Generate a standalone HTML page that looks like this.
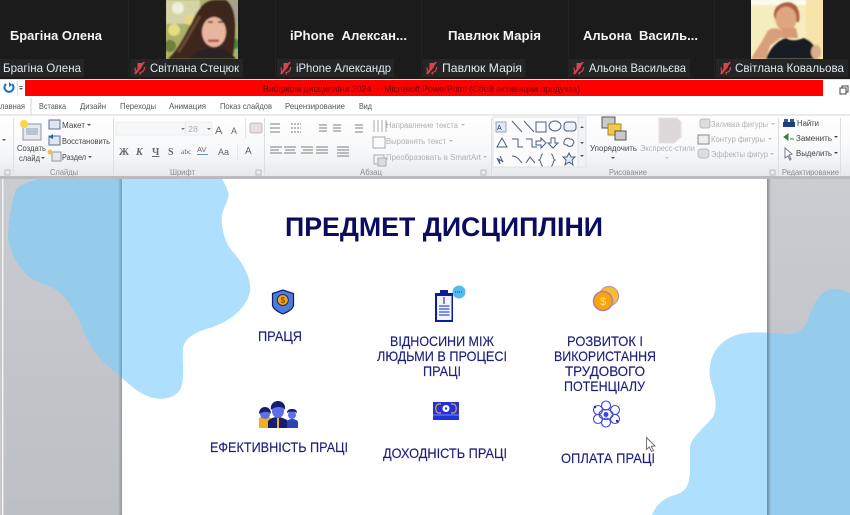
<!DOCTYPE html>
<html><head><meta charset="utf-8">
<style>
html,body{margin:0;padding:0;background:#1a1a1a;width:850px;height:515px;overflow:hidden}
svg{display:block}
text{font-family:"Liberation Sans",sans-serif}
.n{font-weight:bold;font-size:13px;fill:#f4f4f4}
.l{font-size:12px;fill:#dcecf8}
.t{font-size:8.3px;fill:#555}
.r{font-size:8.6px;fill:#444}
.d{font-size:8.6px;fill:#b0b0b0}
.g{font-size:8.6px;fill:#8a8a8a}
.s{font-size:14px;fill:#1f1f7c;stroke:#1f1f7c;stroke-width:.15px}
</style></head><body>
<svg width="850" height="515" viewBox="0 0 850 515" xmlns="http://www.w3.org/2000/svg">
<defs>
<linearGradient id="rib" x1="0" y1="0" x2="0" y2="1"><stop offset="0" stop-color="#ffffff"/><stop offset=".6" stop-color="#f7f8f9"/><stop offset="1" stop-color="#e6e8eb"/></linearGradient>
<linearGradient id="bg" x1="0" y1="0" x2="0" y2="1"><stop offset="0" stop-color="#cbccd2"/><stop offset="1" stop-color="#bcbfc4"/></linearGradient>
<linearGradient id="sL" x1="0" y1="0" x2="1" y2="0"><stop offset="0" stop-color="#000" stop-opacity="0"/><stop offset="1" stop-color="#000" stop-opacity=".22"/></linearGradient>
<linearGradient id="sR" x1="0" y1="0" x2="1" y2="0"><stop offset="0" stop-color="#000" stop-opacity=".32"/><stop offset="1" stop-color="#000" stop-opacity="0"/></linearGradient>
<filter id="b1" x="-10%" y="-10%" width="120%" height="120%"><feGaussianBlur stdDeviation="0.9"/></filter>
<filter id="b0" x="-5%" y="-5%" width="110%" height="110%"><feGaussianBlur stdDeviation="0.3"/></filter>
<clipPath id="slide"><rect x="122" y="179" width="645" height="336"/></clipPath>
<clipPath id="p1"><rect x="166" y="0" width="72" height="59"/></clipPath>
<clipPath id="p2"><rect x="751" y="0" width="72" height="59"/></clipPath>
<path id="blobL" d="M37 179C28 183 18 184 15 192C11 205 9 220 8 235C9 250 16 264 27 275C36 283 46 284 55 289C66 296 74 309 81 325C88 343 98 360 113 370C125 380 135 392 150 397C163 401 176 398 181 388C185 376 182 360 183 348C185 338 195 332 210 328C225 323 245 312 250 292C252 278 242 262 233 252C224 242 221 226 222 215C224 205 231 197 228 192C226 186 224 182 222 179Z"/>
<path id="blobR" d="M652 515C656 505 663 498 675 495C686 492 689 485 690 473L690 447C691 438 702 430 713 417C716 410 716 404 715 397C713 385 708 378 710 367C711 352 722 338 740 334C755 331 770 333 787 334C798 334 804 330 808 320C813 305 820 290 833 289C840 289 846 291 850 293L850 515Z"/>
<path id="mic" d="M0 11.500L9 0L11 0L2 12.500ZM3.500 1h4.500v4l-4.500 5.500zM.5 5.500h1.200c0 1.500 0 2.500 .5 3.500l-.8 1c-.8-1-.9-3-.9-4.500zM10 5h1.200c0 3-1.500 5.500-4.200 5.800v1.700h-1.500v-2.500c2.500 0 4.500-2 4.500-5z"/>
</defs>

<!-- zoom bar -->
<rect width="850" height="79" fill="#1b1b1b"/>
<g fill="#232323"><rect x="128" width="1" height="78"/><rect x="275" width="1" height="78"/><rect x="421" width="1" height="78"/><rect x="568" width="1" height="78"/><rect x="714" width="1" height="78"/></g>

<g clip-path="url(#p1)">
<rect x="166" width="72" height="59" fill="#a9b16a"/>
<g filter="url(#b1)">
<rect x="166" y="0" width="34" height="24" fill="#d6d3a8"/>
<circle cx="178" cy="8" r="6" fill="#eef0d8"/><circle cx="190" cy="20" r="5" fill="#e8d884"/>
<circle cx="174" cy="30" r="6" fill="#e6dc80"/><circle cx="170" cy="46" r="6" fill="#6f7f3a"/>
<rect x="229" y="0" width="9" height="22" fill="#a89f8c"/>
<circle cx="235" cy="44" r="5" fill="#3f8a3c"/><circle cx="232" cy="30" r="3" fill="#7fa050"/>
<path d="M168 59C178 50 186 34 194 18C200 6 206 0 216 0L226 0C232 4 236 14 235 30C235 42 234 52 232 59Z" fill="#3d271c"/>
<path d="M178 52C186 42 192 28 200 16" stroke="#6a4634" stroke-width="3" fill="none"/>
<ellipse cx="214" cy="32" rx="12" ry="15" fill="#e8b69c"/>
<path d="M201 27C206 17 216 13 228 20L228 6L204 8Z" fill="#3d271c"/>
<path d="M208 22h5M218 22h5" stroke="#4a3028" stroke-width="1.500"/>
<path d="M208 39.500h11v2.500h-11z" fill="#b5484c"/>
<path d="M188 59C196 51 206 47 214 49C224 47 230 52 236 59Z" fill="#2a2120"/>
</g></g>

<g clip-path="url(#p2)">
<rect x="751" width="72" height="59" fill="#f6edbf"/>
<g filter="url(#b1)">
<rect x="751" width="72" height="5" fill="#fbfbf3"/>
<rect x="806" y="0" width="17" height="59" fill="#f8e4a8"/>
<path d="M774 16C773 6 782 2 788 2C796 2 801 10 799 22L776 22Z" fill="#b3613f"/>
<ellipse cx="786" cy="19" rx="10.500" ry="12.500" fill="#dda680"/>
<path d="M782 28h14l2 10h-18z" fill="#d69a74"/>
<path d="M751 59C756 50 762 42 767 32C770 27 778 27 783 32L782 37L770 46L766 59Z" fill="#d8a07a"/>
<path d="M766 59C770 48 778 40 786 38C792 42 798 40 804 38C810 40 814 44 816 50L816 59Z" fill="#171a22"/>
<ellipse cx="816" cy="52" rx="5" ry="7" fill="#dcae8c"/>
</g></g>

<g fill="#252525">
<rect x="0" y="59" width="84" height="18"/><rect x="130" y="59" width="113" height="18"/><rect x="277" y="59" width="117" height="18"/><rect x="423" y="59" width="102" height="18"/><rect x="569" y="59" width="121" height="18"/><rect x="716" y="59" width="132" height="18"/>
</g>
<g fill="#d9434c">
<use href="#mic" x="134" y="62"/><use href="#mic" x="280" y="62"/><use href="#mic" x="426" y="62"/><use href="#mic" x="573" y="62"/><use href="#mic" x="720" y="62"/>
</g>
<g filter="url(#b0)">
<text class="n" x="10" y="40" textLength="92" lengthAdjust="spacingAndGlyphs">Брагіна Олена</text>
<text class="n" x="290" y="40" textLength="117" lengthAdjust="spacingAndGlyphs" xml:space="preserve">iPhone  Алексан...</text>
<text class="n" x="448" y="40" textLength="93" lengthAdjust="spacingAndGlyphs">Павлюк Марія</text>
<text class="n" x="583" y="40" textLength="115" lengthAdjust="spacingAndGlyphs" xml:space="preserve">Альона  Василь...</text>
</g>
<g>
<text class="l" x="3" y="72" textLength="78" lengthAdjust="spacingAndGlyphs">Брагіна Олена</text>
<text class="l" x="150" y="72" textLength="89" lengthAdjust="spacingAndGlyphs">Світлана Стецюк</text>
<text class="l" x="296" y="72" textLength="95" lengthAdjust="spacingAndGlyphs">iPhone Александр</text>
<text class="l" x="442" y="72" textLength="80" lengthAdjust="spacingAndGlyphs">Павлюк Марія</text>
<text class="l" x="589" y="72" textLength="97" lengthAdjust="spacingAndGlyphs">Альона Васильєва</text>
<text class="l" x="735" y="72" textLength="109" lengthAdjust="spacingAndGlyphs">Світлана Ковальова</text>
</g>

<!-- title bar -->
<rect x="0" y="79" width="850" height="18" fill="#fff"/>
<rect x="25" y="80" width="798" height="16" fill="#fe0000"/>
<rect x="0" y="79" width="850" height="1" fill="#dfe3e6"/>
<path d="M6 84a4.500 4.500 0 1 0 6 0" fill="none" stroke="#1f6fc4" stroke-width="2"/><path d="M9 82l3 3-3 2z" fill="#1f6fc4"/>
<rect x="17" y="81" width="1" height="15" fill="#ddd"/>
<path d="M19 88h4l-2 2z" fill="#555"/><rect x="19" y="86" width="4" height="1" fill="#777"/>
<text x="263" y="92" font-size="9.500" fill="#5c0606" textLength="317" lengthAdjust="spacingAndGlyphs" xml:space="preserve">Вибіркові дисципліни 2024  -  Microsoft PowerPoint (Сбой активации продукта)</text>
<g fill="none" stroke="#444" stroke-width="1"><rect x="840" y="88" width="6" height="6" fill="#fff"/><path d="M842 88v-2h6v6h-2"/></g>

<!-- tabs -->
<rect x="0" y="97" width="850" height="18" fill="#fff"/>
<g filter="url(#b0)">
<text class="t" x="0" y="109" textLength="25" lengthAdjust="spacingAndGlyphs" fill="#444">лавная</text>
<text class="t" x="39" y="109" textLength="27" lengthAdjust="spacingAndGlyphs">Вставка</text>
<text class="t" x="80" y="109" textLength="26" lengthAdjust="spacingAndGlyphs">Дизайн</text>
<text class="t" x="120" y="109" textLength="36" lengthAdjust="spacingAndGlyphs">Переходы</text>
<text class="t" x="169" y="109" textLength="37" lengthAdjust="spacingAndGlyphs">Анимация</text>
<text class="t" x="220" y="109" textLength="52" lengthAdjust="spacingAndGlyphs">Показ слайдов</text>
<text class="t" x="285" y="109" textLength="60" lengthAdjust="spacingAndGlyphs">Рецензирование</text>
<text class="t" x="359" y="109" textLength="13" lengthAdjust="spacingAndGlyphs">Вид</text>
</g>

<!-- ribbon -->
<rect x="0" y="115" width="850" height="62" fill="url(#rib)"/>
<path d="M0 115H31V98M31 115H850" fill="none" stroke="#d4d6da"/>
<rect x="0" y="176" width="850" height="3" fill="#b9bbbf"/>
<g fill="#dcdee1"><rect x="13" y="118" width="1" height="57"/><rect x="113" y="118" width="1" height="57"/><rect x="264" y="118" width="1" height="57"/><rect x="491" y="118" width="1" height="57"/><rect x="778" y="118" width="1" height="57"/><rect x="840" y="118" width="1" height="57"/></g>

<g filter="url(#b0)">
<!-- slides group -->
<path d="M2 139h4l-2 2z" fill="#555"/>
<rect x="23" y="124" width="18" height="16" fill="#e6e9ef" stroke="#8d97a6"/><rect x="26" y="128" width="12" height="7" fill="#b9c4d6"/>
<circle cx="24" cy="124" r="4" fill="#f8d840"/>
<text class="r" x="17" y="151" textLength="29" lengthAdjust="spacingAndGlyphs">Создать</text>
<text class="r" x="19" y="161" textLength="21" lengthAdjust="spacingAndGlyphs">слайд</text><path d="M41 157h4l-2 2z" fill="#555"/>
<rect x="49" y="120" width="11" height="9" fill="#dfe6f0" stroke="#5a6f94"/>
<text class="r" x="62" y="128" textLength="23" lengthAdjust="spacingAndGlyphs">Макет</text><path d="M87 124h4l-2 2z" fill="#555"/>
<rect x="49" y="136" width="11" height="9" fill="#dfe6f0" stroke="#5a6f94"/><path d="M49 137l4-3v5z" fill="#1e5fb0"/>
<text class="r" x="62" y="144" textLength="48" lengthAdjust="spacingAndGlyphs">Восстановить</text>
<rect x="52" y="152" width="9" height="9" fill="#e8e8ec" stroke="#8d97a6"/><circle cx="50" cy="152" r="2.500" fill="#f2c23c"/>
<text class="r" x="62" y="160" textLength="24" lengthAdjust="spacingAndGlyphs">Раздел</text><path d="M88 156h4l-2 2z" fill="#555"/>
<text class="g" x="50" y="175" textLength="28" lengthAdjust="spacingAndGlyphs">Слайды</text>
<rect x="5" y="170" width="5" height="5" fill="none" stroke="#bbb"/>

<!-- font -->
<rect x="116" y="122" width="69" height="13" fill="#f6f7f8" stroke="#eceef0"/><rect x="186" y="122" width="26" height="13" fill="#f6f7f8" stroke="#eceef0"/>
<path d="M181 128h4l-2 2zM207 128h4l-2 2z" fill="#777"/>
<text class="d" x="188" y="132" textLength="10" lengthAdjust="spacingAndGlyphs">28</text>
<text x="215" y="134" font-size="11" fill="#666">A</text><text x="231" y="134" font-size="9" fill="#666">A</text>
<rect x="245" y="118" width="1" height="20" fill="#e5e5e5"/>
<rect x="250" y="123" width="12" height="10" rx="2" fill="#e9dfe3" stroke="#bbb"/>
<g fill="#666">
<text x="119" y="155" font-size="10" font-weight="bold" style="font-family:'Liberation Serif'">Ж</text>
<text x="136" y="155" font-size="10" font-style="italic" font-weight="bold" style="font-family:'Liberation Serif'">К</text>
<text x="152" y="155" font-size="10" font-weight="bold" text-decoration="underline" style="font-family:'Liberation Serif'">Ч</text>
<text x="168" y="155" font-size="10" font-weight="bold" style="font-family:'Liberation Serif'">S</text>
<text x="181" y="154" font-size="7.500" style="font-family:'Liberation Serif'">abc</text>
<text x="197" y="152" font-size="7.500">AV</text>
<text x="218" y="155" font-size="9">Aa</text>
<text x="245" y="154" font-size="10">A</text>
</g>
<rect x="197" y="154" width="11" height="1" fill="#6e8fb0"/>
<rect x="237" y="144" width="1" height="16" fill="#e5e5e5"/>
<text class="g" x="170" y="175" textLength="25" lengthAdjust="spacingAndGlyphs">Шрифт</text>
<rect x="256" y="170" width="5" height="5" fill="none" stroke="#bbb"/>

<!-- paragraph -->
<g stroke="#7d7d7d" stroke-width="1" fill="none">
<path d="M270 124h10M270 128h10M270 132h10"/>
<path d="M291 124h10M291 128h10M291 132h10" stroke-dasharray="2 1"/>
<path d="M319 125h8M319 128h8M319 131h8M333 125h8M333 128h8M333 131h8"/>
<path d="M355 125h8M355 128h8M355 132h8"/>
<path d="M270 147h12M270 150h9M270 153h12M284 147h12M285 150h10M284 153h12M301 147h12M303 150h10M301 153h12M316 147h12M316 150h12M316 153h12M337 147h12M337 150h12M337 153h12M337 156h12"/>
</g>
<g stroke="#aaa" fill="none"><path d="M374 120v12M378 120v12M382 120v12M386 120v12"/><rect x="373" y="137" width="12" height="11"/><rect x="374" y="155" width="10" height="9"/><rect x="378" y="158" width="8" height="8" fill="#ddd"/></g>
<text class="d" x="386" y="128" textLength="72" lengthAdjust="spacingAndGlyphs">Направление текста</text><path d="M461 124h4l-2 2z" fill="#bbb"/>
<text class="d" x="386" y="144" textLength="60" lengthAdjust="spacingAndGlyphs">Выровнять текст</text><path d="M449 140h4l-2 2z" fill="#bbb"/>
<text class="d" x="386" y="160" textLength="95" lengthAdjust="spacingAndGlyphs">Преобразовать в SmartArt</text><path d="M483 156h4l-2 2z" fill="#bbb"/>
<text class="g" x="360" y="175" textLength="22" lengthAdjust="spacingAndGlyphs">Абзац</text>
<rect x="481" y="170" width="5" height="5" fill="none" stroke="#bbb"/>

<!-- shapes gallery -->
<rect x="493" y="117" width="88" height="50" fill="#fbfbfc" stroke="#e0e2e5"/>
<rect x="496" y="122" width="10" height="10" fill="#dfe8f4" stroke="#8fa6c4"/><text x="497" y="130" font-size="7" fill="#334">A</text>
<g fill="none" stroke="#49607e" stroke-width="1">
<path d="M512 121l10 11M524 121l10 11"/><rect x="536" y="122" width="10" height="10"/><ellipse cx="555" cy="126" rx="6" ry="5"/><rect x="564" y="122" width="12" height="9" rx="3" fill="#e9f2fb"/>
<path d="M497 147l5-9 5 9zM512 139h6v8h5M526 139h6v8h5"/>
<path d="M536 141h5v-3l5 5-5 5v-3h-5zM551 138h4v5h3l-5 5-5-5h3zM564 142c0-3 4-5 6-3 3 0 5 3 3 5 0 3-5 3-6 1-2 0-4-1-3-3z"/>
<path d="M497 158l3 6-1-5 4 3-3-6M512 156c4 0 6 2 10 7M526 163l4-6 5 6M543 154c-3 0-1 5-4 6 3 1 1 6 4 6M551 154c3 0 1 5 4 6-3 1-1 6-4 6"/>
<path d="M569 153l2 4 4 0-3 3 1 5-4-3-4 3 1-5-3-3 4 0z" fill="#dfeaf6"/>
</g>
<rect x="578" y="117" width="8" height="50" fill="#f1f2f4" stroke="#e0e2e5"/>
<path d="M580 128h4l-2 -2zM580 142h4l-2 2zM580 155h4l-2 2z" fill="#555"/>

<rect x="602" y="117" width="13" height="11" fill="#c9c9c9" stroke="#555"/>
<rect x="608" y="124" width="13" height="11" fill="#f2c94c" stroke="#a98a1e"/>
<rect x="615" y="131" width="11" height="9" fill="#c9c9c9" stroke="#555"/>
<text class="r" x="590" y="151" textLength="47" lengthAdjust="spacingAndGlyphs">Упорядочить</text><path d="M611 157h4l-2 2z" fill="#555"/>
<path d="M659 118h18l4 4v15l-7 6h-15z" fill="#ddd8da" stroke="#e6e2e4"/>
<text class="d" x="640" y="151" textLength="55" lengthAdjust="spacingAndGlyphs">Экспресс-стили</text><path d="M665 157h4l-2 2z" fill="#ccc"/>
<rect x="700" y="119" width="10" height="9" rx="2" fill="#ddd" stroke="#bbb"/>
<text class="d" x="711" y="127" textLength="57" lengthAdjust="spacingAndGlyphs">Заливка фигуры</text><path d="M771 123h4l-2 2z" fill="#bbb"/>
<rect x="698" y="135" width="11" height="9" fill="#eee" stroke="#888"/>
<text class="d" x="711" y="142" textLength="54" lengthAdjust="spacingAndGlyphs">Контур фигуры</text><path d="M768 138h4l-2 2z" fill="#bbb"/>
<rect x="698" y="149" width="11" height="9" rx="3" fill="#ddd" stroke="#bbb"/>
<text class="d" x="711" y="157" textLength="57" lengthAdjust="spacingAndGlyphs">Эффекты фигур</text><path d="M770 153h4l-2 2z" fill="#bbb"/>
<text class="g" x="609" y="175" textLength="38" lengthAdjust="spacingAndGlyphs">Рисование</text>
<rect x="770" y="170" width="5" height="5" fill="none" stroke="#bbb"/>

<!-- editing -->
<rect x="784" y="119" width="4" height="8" fill="#2a5aa8"/><rect x="790" y="119" width="4" height="8" fill="#2a5aa8"/><rect x="783" y="122" width="12" height="5" fill="#1e3f80"/>
<text class="r" x="797" y="126" textLength="22" lengthAdjust="spacingAndGlyphs">Найти</text>
<path d="M784 137l4-3v6zM790 139h4" stroke="#2a8a3c" fill="#666"/>
<text class="r" x="796" y="141" textLength="36" lengthAdjust="spacingAndGlyphs">Заменить</text><path d="M834 136h4l-2 2z" fill="#444"/>
<path d="M785 148l0 10 3-2 2 4 1-1-2-4 3-1z" fill="#fff" stroke="#778"/>
<text class="r" x="796" y="156" textLength="36" lengthAdjust="spacingAndGlyphs">Выделить</text><path d="M834 152h4l-2 2z" fill="#444"/>
<text class="g" x="782" y="175" textLength="57" lengthAdjust="spacingAndGlyphs">Редактирование</text>
</g>

<!-- canvas -->
<rect x="0" y="179" width="850" height="336" fill="url(#bg)"/>
<rect x="0" y="179" width="2" height="336" fill="#c9c9cb"/><rect x="2" y="179" width="1.500" height="336" fill="#f0f0f2"/>
<use href="#blobL" fill="#95cbeb"/>
<use href="#blobR" fill="#95cbeb"/>
<rect x="118" y="179" width="4" height="336" fill="url(#sL)"/>
<rect x="767" y="179" width="4" height="336" fill="url(#sR)"/>
<rect x="122" y="179" width="645" height="336" fill="#fff"/>
<g clip-path="url(#slide)"><use href="#blobL" fill="#aee0fd"/><use href="#blobR" fill="#aee0fd"/></g>

<text x="285" y="236" font-size="27" font-weight="bold" fill="#0b0b60" textLength="318" lengthAdjust="spacingAndGlyphs">ПРЕДМЕТ ДИСЦИПЛІНИ</text>

<g filter="url(#b0)">
<text class="s" x="258" y="341" textLength="44" lengthAdjust="spacingAndGlyphs">ПРАЦЯ</text>
<text class="s" x="390" y="346" textLength="104" lengthAdjust="spacingAndGlyphs">ВІДНОСИНИ МІЖ</text>
<text class="s" x="377" y="361" textLength="130" lengthAdjust="spacingAndGlyphs">ЛЮДЬМИ В ПРОЦЕСІ</text>
<text class="s" x="423" y="376" textLength="38" lengthAdjust="spacingAndGlyphs">ПРАЦІ</text>
<text class="s" x="567" y="346" textLength="76" lengthAdjust="spacingAndGlyphs">РОЗВИТОК І</text>
<text class="s" x="554" y="361" textLength="102" lengthAdjust="spacingAndGlyphs">ВИКОРИСТАННЯ</text>
<text class="s" x="565" y="376" textLength="80" lengthAdjust="spacingAndGlyphs">ТРУДОВОГО</text>
<text class="s" x="564" y="391" textLength="81" lengthAdjust="spacingAndGlyphs">ПОТЕНЦІАЛУ</text>
<text class="s" x="210" y="452" textLength="138" lengthAdjust="spacingAndGlyphs">ЕФЕКТИВНІСТЬ ПРАЦІ</text>
<text class="s" x="383" y="458" textLength="124" lengthAdjust="spacingAndGlyphs">ДОХОДНІСТЬ ПРАЦІ</text>
<text class="s" x="561" y="463" textLength="94" lengthAdjust="spacingAndGlyphs">ОПЛАТА ПРАЦІ</text>
</g>

<!-- icons -->
<g filter="url(#b0)">
<path d="M272.500 293.500l10.500-3.500 10.500 3.500v12c-1 4-6 6.500-10.500 8.500-4.500-2-9.500-4.500-10.500-8.500z" fill="#4f7bd8" stroke="#0f1f6b" stroke-width="1.200"/>
<circle cx="282.800" cy="300" r="5.500" fill="#f5a80e" stroke="#1a2a7a"/>
<text x="282.800" y="303" font-size="8" font-weight="bold" text-anchor="middle" fill="#7a4d00">$</text>

<circle cx="459" cy="292" r="6.500" fill="#56b9f0"/>
<path d="M455 292h8" stroke="#123a80" stroke-dasharray="1 1" stroke-width="1"/>
<rect x="435" y="293" width="18" height="29" fill="#0a1a9a"/>
<rect x="437" y="296" width="14.500" height="24" fill="#f1f4ff"/>
<rect x="440" y="290" width="8" height="5" fill="#0a1a9a"/>
<path d="M444 297v7" stroke="#0a1a6a"/>
<path d="M439 306h10.500M439 309h10.500M439 312h10.500M439 315h10.500" stroke="#3d4fd0" stroke-width="1.200"/>

<circle cx="609" cy="296" r="9.500" fill="#fdbb2e" stroke="#b99ab0" stroke-width="1.200"/>
<circle cx="603" cy="301" r="9.500" fill="#fca400" stroke="#a680c0" stroke-width="1.500"/>
<text x="603" y="305" font-size="11" text-anchor="middle" fill="#fde2a0">$</text>

<g>
<path d="M259 428v-9c0-2 4-3 6-3s6 1 6 3v9z" fill="#f0b21e"/>
<circle cx="265" cy="414" r="5" fill="#5b6ee8"/><path d="M259 414c0-5 3-7 6-7s6 2 6 7c-2-3-8-3-12 0z" fill="#141f6e"/>
<path d="M268 428v-6c0-3 6-5 9-5s11 2 11 5v6z" fill="#141f6e"/>
<rect x="277" y="418" width="2" height="10" fill="#f0b21e"/>
<ellipse cx="278" cy="411" rx="6" ry="7" fill="#5b6ee8"/><path d="M271 410c-1-6 3-9 7-9s8 3 7 9c-2-4-10-4-14 0z" fill="#141f6e"/>
<path d="M287 428v-6c0-2 3-3 5-3s6 1 6 3v6z" fill="#2f44b0"/>
<circle cx="292" cy="415" r="4" fill="#5b6ee8"/><path d="M287 413c0-3 2-4 5-4s5 1 5 4c-3-2-7-2-10 0z" fill="#141f6e"/>
</g>

<rect x="433" y="402" width="26" height="18" fill="#2233d8"/>
<rect x="433" y="414.500" width="26" height="1" fill="#6f86ff"/>
<path d="M438 404c-3 2-3 7 0 9M454 404c3 2 3 7 0 9M441 404h-3M451 404h3M441 413h-3M451 413h3" fill="none" stroke="#e5a23a" stroke-width="1.200"/>
<circle cx="446" cy="408.500" r="3.500" fill="#fff"/>
<circle cx="446" cy="408.500" r="1.200" fill="#2233d8"/>

<g fill="none" stroke="#3a46e0" stroke-width="1.100">
<circle cx="606" cy="405.500" r="4.500"/><circle cx="606" cy="422.500" r="4.500"/>
<circle cx="598" cy="410" r="4.500"/><circle cx="615" cy="410" r="4.500"/>
<circle cx="598" cy="419" r="4.500"/><circle cx="615" cy="419" r="4.500"/>
<ellipse cx="606" cy="414.500" rx="7" ry="5"/>
</g>
<circle cx="606" cy="414.500" r="2.500" fill="#3a46e0"/><circle cx="595" cy="407" r="1.200" fill="#1a2a9a"/><circle cx="617" cy="421" r="1.200" fill="#1a2a9a"/>

<path d="M646.500 437.500v12l2.800-2.500 2.200 4.500 2-1-2.200-4.200 3.700-.3z" fill="#fff" stroke="#666" stroke-width=".9"/>
</g>
</svg>
</body></html>
